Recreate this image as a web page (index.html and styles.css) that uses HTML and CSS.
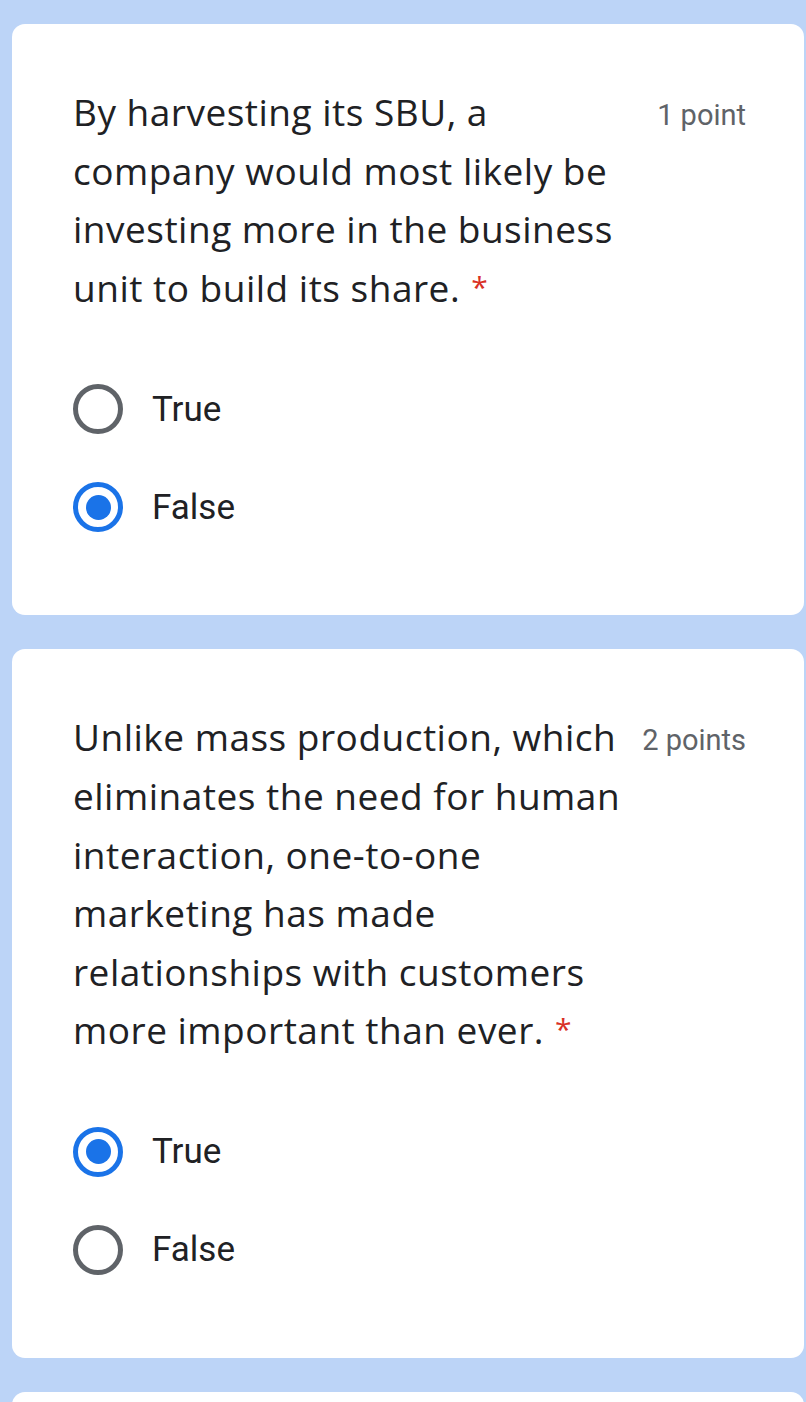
FILE: index.html
```html
<!DOCTYPE html>
<html lang="en">
<head>
<meta charset="utf-8">
<title>Quiz</title>
<link rel="stylesheet" href="styles.css">
</head>
<body>
  <div class="card">
    <div class="head">
      <div class="title">By harvesting its SBU, a company would most likely be investing more in the business unit to build its share.<span class="req">*</span></div>
      <div class="points">1 point</div>
    </div>
    <div class="options">
      <div class="option"><span class="radio"></span><span class="label">True</span></div>
      <div class="option"><span class="radio checked"></span><span class="label">False</span></div>
    </div>
  </div>
  <div class="card">
    <div class="head">
      <div class="title">Unlike mass production, which eliminates the need for human interaction, one-to-one marketing has made relationships with customers more important than ever.<span class="req">*</span></div>
      <div class="points">2 points</div>
    </div>
    <div class="options">
      <div class="option"><span class="radio checked"></span><span class="label">True</span></div>
      <div class="option"><span class="radio"></span><span class="label">False</span></div>
    </div>
  </div>
  <div class="card stub"></div>
</body>
</html>
```
FILE: styles.css
```css
html, body {
  margin: 0;
  padding: 0;
}
body {
  background: #bcd4f7;
  font-family: "Open Sans", Roboto, sans-serif;
  color: #202124;
  padding-top: 24px;
  height: 1402px;
  overflow: hidden;
  box-sizing: border-box;
}
.card {
  background: #ffffff;
  margin: 0 2px 34px 12px;
  border-radius: 13px;
  padding: 59px 58px 59px 61px;
}
.card.stub {
  height: 200px;
}
.head {
  display: flex;
  align-items: flex-start;
  gap: 16px;
}
.title {
  flex: 1;
  font-size: 37px;
  line-height: 58.6px;
  letter-spacing: 0.5px;
}
.req {
  color: #d93025;
  font-size: 30px;
  line-height: 1;
  letter-spacing: 0;
  margin-left: 11px;
  vertical-align: 4px;
}
.points {
  font-family: Roboto, sans-serif;
  font-size: 29px;
  line-height: 58.6px;
  padding-top: 3px;
  color: #5f6368;
  white-space: nowrap;
}
.options {
  margin-top: 43px;
  display: flex;
  flex-direction: column;
}
.option {
  height: 98px;
  display: flex;
  align-items: center;
  gap: 29px;
}
.radio {
  width: 50px;
  height: 50px;
  box-sizing: border-box;
  border: 5px solid #5f6368;
  border-radius: 50%;
  display: flex;
  align-items: center;
  justify-content: center;
}
.radio.checked {
  border-color: #1a73e8;
}
.radio.checked::after {
  content: "";
  width: 25px;
  height: 25px;
  border-radius: 50%;
  background: #1a73e8;
}
.label {
  font-family: Roboto, sans-serif;
  font-size: 35px;
}
```
